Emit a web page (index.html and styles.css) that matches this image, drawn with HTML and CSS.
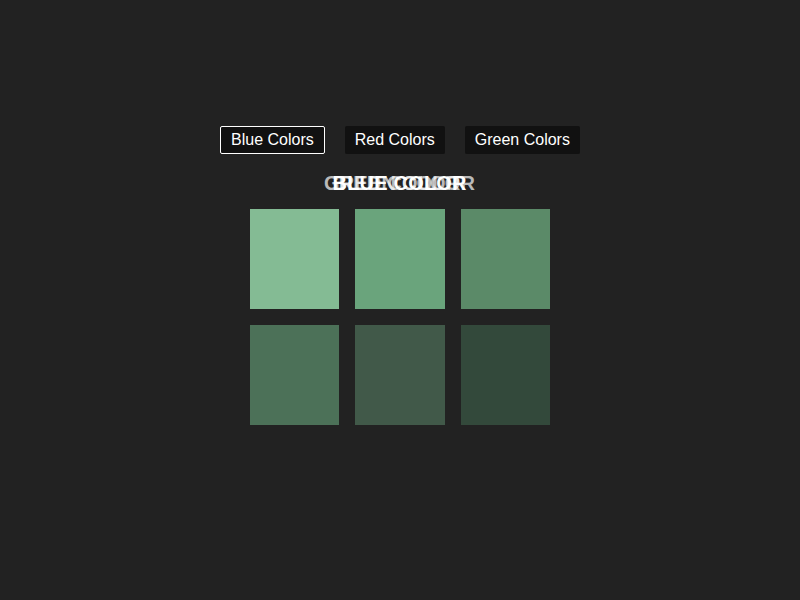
FILE: index.html
```html
<!DOCTYPE html>
<html lang="en">
<head>
<meta charset="utf-8">
<title>Colors</title>
<link rel="stylesheet" href="styles.css">
</head>
<body>
<main class="tabs">
  <nav class="tab-list">
    <button class="tab active">Blue Colors</button>
    <button class="tab">Red Colors</button>
    <button class="tab">Green Colors</button>
  </nav>
  <section class="palette">
    <div class="titles">
      <h2 class="title faded">GREEN COLOR</h2>
      <h2 class="title faded">RED COLOR</h2>
      <h2 class="title">BLUE COLOR</h2>
    </div>
    <div class="swatches">
      <div class="swatch g1"></div>
      <div class="swatch g2"></div>
      <div class="swatch g3"></div>
      <div class="swatch g4"></div>
      <div class="swatch g5"></div>
      <div class="swatch g6"></div>
    </div>
  </section>
</main>
</body>
</html>
```
FILE: styles.css
```css
* { box-sizing: border-box; margin: 0; padding: 0; }
body {
  background: #222;
  color: #fff;
  font-family: "Liberation Sans", Arial, sans-serif;
}
.tabs {
  display: flex;
  flex-direction: column;
  align-items: center;
  padding-top: 126px;
}
.tab-list { display: flex; gap: 20px; }
.tab {
  height: 28px;
  padding: 0 10px;
  border: 1px solid #111;
  border-radius: 2px;
  background: #111;
  color: #fff;
  font: 16px/26px "Liberation Sans", Arial, sans-serif;
  white-space: nowrap;
}
.tab:not(.active) { border-width: 1px 0; }
.tab.active { border-color: #fff; }
.palette { width: 300px; margin-top: 18px; }
.titles { display: grid; height: 24px; margin-bottom: 13px; }
.title {
  grid-area: 1 / 1;
  padding-right: 0.8px;
  font-size: 20px;
  line-height: 23px;
  letter-spacing: 0.2px;
  text-align: center;
  white-space: nowrap;
}
.faded { color: rgba(255, 255, 255, 0.7); }
.swatches {
  display: grid;
  grid-template-columns: repeat(3, 1fr);
  grid-auto-rows: 100px;
  gap: 16px;
}
.g1 { background: #84bb94; }
.g2 { background: #6aa47c; }
.g3 { background: #5b8a68; }
.g4 { background: #4c7158; }
.g5 { background: #415949; }
.g6 { background: #33493b; }
```
